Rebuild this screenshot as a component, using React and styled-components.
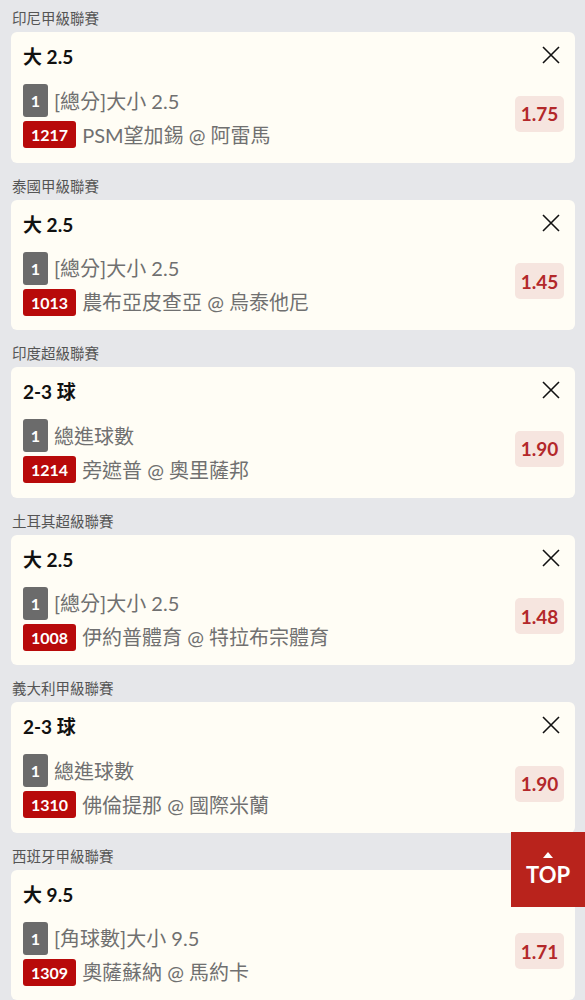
import React from "react";
import styled, {createGlobalStyle} from "styled-components";

const GlobalStyle = createGlobalStyle`
    html, body {margin:0; padding:0; background:#e6e7ea;}
    body {font-family: Lato, "Noto Sans CJK TC", sans-serif;}
`;

const bets = [
    {league: "印尼甲級聯賽", pick: "大 2.5", market: "[總分]大小 2.5", code: "1217", match: "PSM望加錫 @ 阿雷馬", odds: "1.75"},
    {league: "泰國甲級聯賽", pick: "大 2.5", market: "[總分]大小 2.5", code: "1013", match: "農布亞皮查亞 @ 烏泰他尼", odds: "1.45"},
    {league: "印度超級聯賽", pick: "2-3 球", market: "總進球數", code: "1214", match: "旁遮普 @ 奧里薩邦", odds: "1.90"},
    {league: "土耳其超級聯賽", pick: "大 2.5", market: "[總分]大小 2.5", code: "1008", match: "伊約普體育 @ 特拉布宗體育", odds: "1.48"},
    {league: "義大利甲級聯賽", pick: "2-3 球", market: "總進球數", code: "1310", match: "佛倫提那 @ 國際米蘭", odds: "1.90"},
    {league: "西班牙甲級聯賽", pick: "大 9.5", market: "[角球數]大小 9.5", code: "1309", match: "奧薩蘇納 @ 馬約卡", odds: "1.71"},
];

const CloseIcon = () => (
    <svg width="20" height="20" viewBox="0 0 20 20">
        <path d="M2 2 L18 18 M18 2 L2 18" stroke="#111" strokeWidth="1.6" fill="none" />
    </svg>
);

const App = () => {
    return(
        <Page>
            <GlobalStyle />
            {bets.map((b, i) => {
                return(
                    <Section key={i}>
                        <League>{b.league}</League>
                        <Card>
                            <Pick>{b.pick}</Pick>
                            <CloseBtn><CloseIcon /></CloseBtn>
                            <Lines>
                                <Line>
                                    <Badge>1</Badge>
                                    <LineText>{b.market}</LineText>
                                </Line>
                                <Line>
                                    <Badge red>{b.code}</Badge>
                                    <LineText>{b.match}</LineText>
                                </Line>
                            </Lines>
                            <Odds>{b.odds}</Odds>
                        </Card>
                    </Section>
                );
            })}
            <TopBtn>
                <Arrow />
                TOP
            </TopBtn>
        </Page>
    );
}

const Page = styled.div`
    margin-top:-5px;
    padding:0 10px 20px 11px;
`;
const Section = styled.div``;
const League = styled.div`
    padding:14px 1px 6px;
    font-size:14.5px;
    line-height:17px;
    color:#555;
    font-family:"Noto Sans CJK TC", sans-serif;
`;
const Card = styled.div`
    display:grid;
    grid-template-columns:1fr auto;
    background:#fffdf5;
    border-radius:6px;
    padding:12px 11px 14.5px 12px;
`;
const Pick = styled.div`
    font-size:19px;
    line-height:26px;
    font-weight:700;
    color:#111;
    font-family:Lato, "Noto Sans CJK TC", sans-serif;
`;
const CloseBtn = styled.div`
    justify-self:end;
    padding:1px 3px 0 0;
    line-height:0;
    align-self:start;
`;
const Lines = styled.div`
    margin-top:14px;
    display:flex;
    flex-direction:column;
    gap:4px;
`;
const Line = styled.div`
    display:flex;
    align-items:center;
    gap:6px;
`;
const Badge = styled.span`
    display:inline-flex;
    align-items:center;
    justify-content:center;
    min-width:25px;
    height:${(p) => p.red ? "27px" : "33px"};
    padding:0 ${(p) => p.red ? "8px" : "0"};
    box-sizing:border-box;
    border-radius:3px;
    background:${(p) => p.red ? "#b80a0a" : "#6b6b6b"};
    color:#fff;
    font-size:16px;
    font-weight:700;
    font-family:Lato, sans-serif;
`;
const LineText = styled.span`
    font-size:20px;
    line-height:24px;
    color:#707070;
    font-family:Lato, "Noto Sans CJK TC", sans-serif;
`;
const Odds = styled.div`
    align-self:center;
    margin-top:9px;
    width:49px;
    height:36px;
    display:flex;
    align-items:center;
    justify-content:center;
    background:#f6e5df;
    border-radius:5px;
    color:#b3282a;
    font-size:19px;
    font-weight:700;
`;
const TopBtn = styled.div`
    position:fixed;
    right:0;
    top:832px;
    width:74px;
    height:75px;
    background:#b9231c;
    color:#fff;
    font-size:22px;
    font-weight:700;
    display:flex;
    flex-direction:column;
    align-items:center;
    justify-content:center;
    gap:3px;
`;
const Arrow = styled.span`
    width:0;
    height:0;
    border-left:5px solid transparent;
    border-right:5px solid transparent;
    border-bottom:6px solid #fff;
`;

export default App;
